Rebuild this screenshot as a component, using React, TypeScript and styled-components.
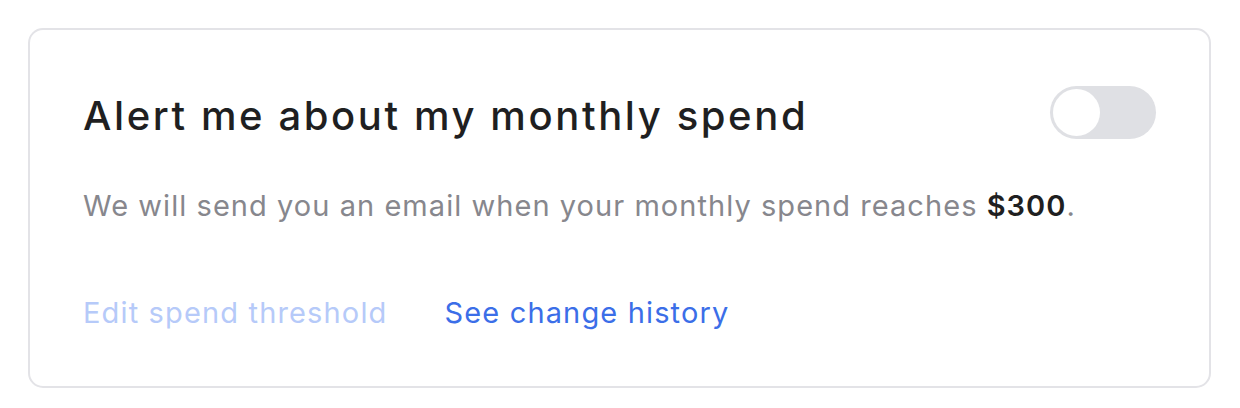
import styled, { createGlobalStyle } from 'styled-components'

const GlobalStyle = createGlobalStyle`
  html, body {
    margin: 0;
    padding: 0;
    background: #ffffff;
  }
  body {
    font-family: Inter, 'Liberation Sans', sans-serif;
  }
`

const Page = styled.div`
  padding: 28px 30px 20px 28px;
`

const Card = styled.section`
  box-sizing: border-box;
  width: 1183px;
  height: 360px;
  border: 2px solid #e3e3e7;
  border-radius: 15px;
  padding: 44px 53px 0 53px;
  display: flex;
  flex-direction: column;
`

const Header = styled.div`
  display: flex;
  align-items: center;
  justify-content: space-between;
  height: 76px;
`

const Title = styled.h2`
  margin: 6px 0 0;
  font-size: 40px;
  font-weight: 500;
  color: #1f1f21;
  letter-spacing: 2.6px;
`

const Toggle = styled.button<{ $on?: boolean }>`
  position: relative;
  width: 106px;
  height: 53px;
  border: none;
  border-radius: 27px;
  padding: 0;
  background: ${({ $on }) => ($on ? '#3b6ee8' : '#dfe0e4')};
  cursor: pointer;
`

const Knob = styled.span<{ $on?: boolean }>`
  position: absolute;
  top: 3px;
  left: ${({ $on }) => ($on ? '56px' : '3px')};
  width: 47px;
  height: 47px;
  border-radius: 50%;
  background: #ffffff;
`

const Description = styled.p`
  margin: 38px 0 0;
  font-size: 29px;
  color: #87878d;
  letter-spacing: 1.05px;
`

const Amount = styled.strong`
  font-weight: 600;
  color: #1f1f21;
`

const Actions = styled.div`
  display: flex;
  gap: 57px;
  margin-top: 72px;
`

const LinkButton = styled.button<{ $disabled?: boolean }>`
  border: none;
  background: none;
  padding: 0;
  font-family: inherit;
  font-size: 29px;
  letter-spacing: 1.15px;
  color: ${({ $disabled }) => ($disabled ? '#b6caf9' : '#3b6ee8')};
  cursor: ${({ $disabled }) => ($disabled ? 'default' : 'pointer')};
`

export default function App() {
  return (
    <>
      <GlobalStyle />
      <Page>
        <Card>
          <Header>
            <Title>Alert me about my monthly spend</Title>
            <Toggle aria-label="Toggle spend alert">
              <Knob />
            </Toggle>
          </Header>
          <Description>
            We will send you an email when your monthly spend reaches <Amount>$300</Amount>.
          </Description>
          <Actions>
            <LinkButton $disabled>Edit spend threshold</LinkButton>
            <LinkButton>See change history</LinkButton>
          </Actions>
        </Card>
      </Page>
    </>
  )
}
